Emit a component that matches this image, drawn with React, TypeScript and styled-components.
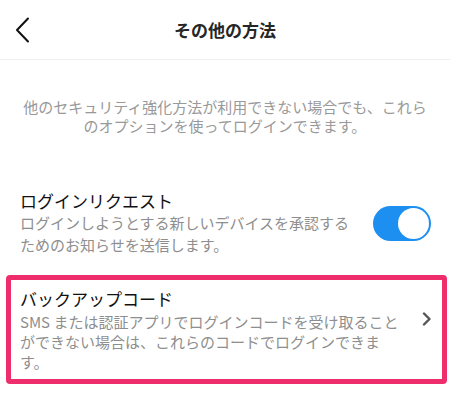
import styled, { createGlobalStyle } from "styled-components";

const GlobalStyle = createGlobalStyle`
  body {
    margin: 0;
    background: #fff;
    font-family: "Noto Sans CJK JP", "Noto Sans", sans-serif;
    color: #262626;
  }
`;

const Screen = styled.div`
  width: 450px;
  height: 404px;
  overflow: hidden;
  background: #fff;
`;

const Header = styled.header`
  height: 59px;
  display: grid;
  grid-template-columns: 60px 1fr 60px;
  align-items: center;
  border-bottom: 1px solid #efefef;
`;

const BackButton = styled.button`
  border: 0;
  background: none;
  padding: 0 0 0 14px;
  display: flex;
  align-items: center;
  height: 100%;
`;

const Title = styled.h1`
  margin: 0;
  font-size: 17px;
  font-weight: 700;
  text-align: center;
  color: #262626;
`;

const Intro = styled.p`
  margin: 37px 0 0;
  padding: 0 16px;
  font-size: 15px;
  line-height: 19px;
  text-align: center;
  color: #999;
`;

const Row = styled.div<{ $highlight?: boolean }>`
  display: flex;
  align-items: center;
  justify-content: space-between;
  gap: 12px;
  margin: ${(p) => (p.$highlight ? "19px 3px 0 6px" : "55px 18px 0 20px")};
  padding: ${(p) => (p.$highlight ? "8px 10px 7px 9px" : "0")};
  border: ${(p) => (p.$highlight ? "5px solid #ee2d6d" : "0")};
  border-radius: ${(p) => (p.$highlight ? "4px" : "0")};
`;

const RowText = styled.div`
  display: flex;
  flex-direction: column;
`;

const RowTitle = styled.div`
  font-size: 17px;
  line-height: 22px;
  color: #111;
`;

const RowSub = styled.div<{ $lh: number }>`
  margin-top: ${(p) => (p.$lh === 20 ? "2px" : "0")};
  font-size: 15px;
  line-height: ${(p) => p.$lh}px;
  color: #8e8e8e;
`;

const Toggle = styled.div`
  flex: none;
  width: 58px;
  height: 35px;
  border-radius: 18px;
  background: #1d8ff0;
  display: flex;
  align-items: center;
  justify-content: flex-end;
  padding: 2px;
  box-sizing: border-box;
  margin-right: 1px;
`;

const Knob = styled.div`
  width: 31px;
  height: 31px;
  border-radius: 50%;
  background: #fff;
`;

const Chevron = styled.svg`
  flex: none;
  margin-top: -22px;
`;

export default function App() {
  return (
    <Screen>
      <GlobalStyle />
      <Header>
        <BackButton aria-label="戻る">
          <svg width="16" height="26" viewBox="0 0 16 26">
            <path d="M14 1.5 L3 13 L14 24.5" fill="none" stroke="#111" strokeWidth="2" strokeLinecap="round" strokeLinejoin="round" />
          </svg>
        </BackButton>
        <Title>その他の方法</Title>
        <span />
      </Header>

      <Intro>
        他のセキュリティ強化方法が利用できない場合でも、これら
        <br />
        のオプションを使ってログインできます。
      </Intro>

      <Row>
        <RowText>
          <RowTitle>ログインリクエスト</RowTitle>
          <RowSub $lh={22}>
            ログインしようとする新しいデバイスを承認する
            <br />
            ためのお知らせを送信します。
          </RowSub>
        </RowText>
        <Toggle>
          <Knob />
        </Toggle>
      </Row>

      <Row $highlight>
        <RowText>
          <RowTitle>バックアップコード</RowTitle>
          <RowSub $lh={20}>
            SMS または認証アプリでログインコードを受け取ること
            <br />
            ができない場合は、これらのコードでログインできま
            <br />
            す。
          </RowSub>
        </RowText>
        <Chevron width="10" height="14" viewBox="0 0 10 14">
          <path d="M2 1.5 L7.5 7 L2 12.5" fill="none" stroke="#555" strokeWidth="2.4" strokeLinecap="round" strokeLinejoin="round" />
        </Chevron>
      </Row>
    </Screen>
  );
}
